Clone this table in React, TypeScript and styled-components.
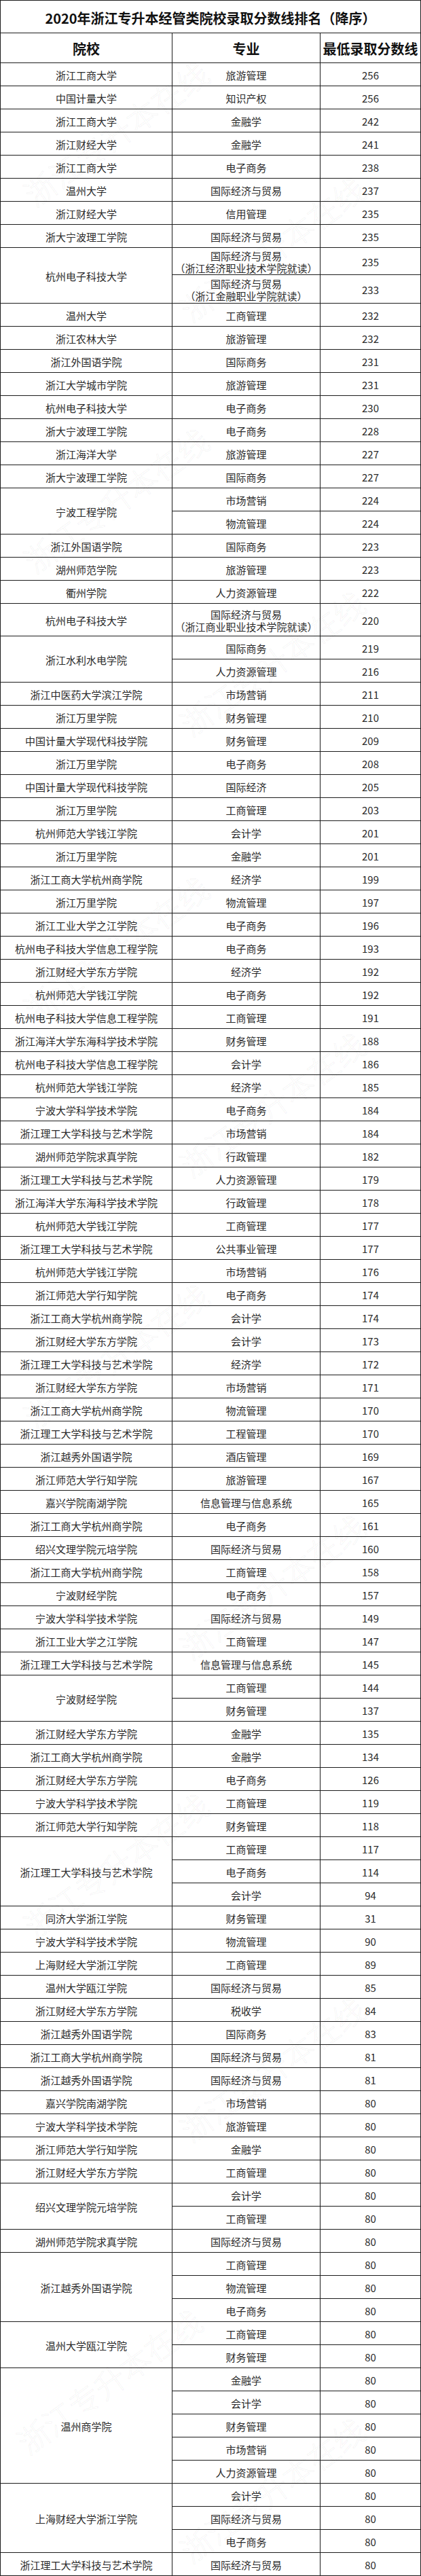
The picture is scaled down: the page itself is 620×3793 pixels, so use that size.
import React from 'react';
import styled, { createGlobalStyle, css } from 'styled-components';

const GlobalStyle = createGlobalStyle`
  html, body {
    margin: 0;
    padding: 0;
    background: #ffffff;
  }
  body {
    font-family: "Noto Sans CJK SC", "Noto Sans", "Liberation Sans", sans-serif;
    color: #222;
  }
`;

type Item = { major: string; score: string; sub?: string; h?: number };
type Group = { school: string; items: Item[] };

const raw: [string, [string, string, string?, number?][]][] = [
  ['浙江工商大学', [['旅游管理', '256']]],
  ['中国计量大学', [['知识产权', '256']]],
  ['浙江工商大学', [['金融学', '242']]],
  ['浙江财经大学', [['金融学', '241']]],
  ['浙江工商大学', [['电子商务', '238']]],
  ['温州大学', [['国际经济与贸易', '237']]],
  ['浙江财经大学', [['信用管理', '235']]],
  ['浙大宁波理工学院', [['国际经济与贸易', '235']]],
  ['杭州电子科技大学', [
    ['国际经济与贸易', '235', '（浙江经济职业技术学院就读）', 40],
    ['国际经济与贸易', '233', '（浙江金融职业学院就读）', 42],
  ]],
  ['温州大学', [['工商管理', '232']]],
  ['浙江农林大学', [['旅游管理', '232']]],
  ['浙江外国语学院', [['国际商务', '231']]],
  ['浙江大学城市学院', [['旅游管理', '231']]],
  ['杭州电子科技大学', [['电子商务', '230']]],
  ['浙大宁波理工学院', [['电子商务', '228']]],
  ['浙江海洋大学', [['旅游管理', '227']]],
  ['浙大宁波理工学院', [['国际商务', '227']]],
  ['宁波工程学院', [['市场营销', '224'], ['物流管理', '224']]],
  ['浙江外国语学院', [['国际商务', '223']]],
  ['湖州师范学院', [['旅游管理', '223']]],
  ['衢州学院', [['人力资源管理', '222']]],
  ['杭州电子科技大学', [['国际经济与贸易', '220', '（浙江商业职业技术学院就读）', 48]]],
  ['浙江水利水电学院', [['国际商务', '219'], ['人力资源管理', '216']]],
  ['浙江中医药大学滨江学院', [['市场营销', '211']]],
  ['浙江万里学院', [['财务管理', '210']]],
  ['中国计量大学现代科技学院', [['财务管理', '209']]],
  ['浙江万里学院', [['电子商务', '208']]],
  ['中国计量大学现代科技学院', [['国际经济', '205']]],
  ['浙江万里学院', [['工商管理', '203']]],
  ['杭州师范大学钱江学院', [['会计学', '201']]],
  ['浙江万里学院', [['金融学', '201']]],
  ['浙江工商大学杭州商学院', [['经济学', '199']]],
  ['浙江万里学院', [['物流管理', '197']]],
  ['浙江工业大学之江学院', [['电子商务', '196']]],
  ['杭州电子科技大学信息工程学院', [['电子商务', '193']]],
  ['浙江财经大学东方学院', [['经济学', '192']]],
  ['杭州师范大学钱江学院', [['电子商务', '192']]],
  ['杭州电子科技大学信息工程学院', [['工商管理', '191']]],
  ['浙江海洋大学东海科学技术学院', [['财务管理', '188']]],
  ['杭州电子科技大学信息工程学院', [['会计学', '186']]],
  ['杭州师范大学钱江学院', [['经济学', '185']]],
  ['宁波大学科学技术学院', [['电子商务', '184']]],
  ['浙江理工大学科技与艺术学院', [['市场营销', '184']]],
  ['湖州师范学院求真学院', [['行政管理', '182']]],
  ['浙江理工大学科技与艺术学院', [['人力资源管理', '179']]],
  ['浙江海洋大学东海科学技术学院', [['行政管理', '178']]],
  ['杭州师范大学钱江学院', [['工商管理', '177']]],
  ['浙江理工大学科技与艺术学院', [['公共事业管理', '177']]],
  ['杭州师范大学钱江学院', [['市场营销', '176']]],
  ['浙江师范大学行知学院', [['电子商务', '174']]],
  ['浙江工商大学杭州商学院', [['会计学', '174']]],
  ['浙江财经大学东方学院', [['会计学', '173']]],
  ['浙江理工大学科技与艺术学院', [['经济学', '172']]],
  ['浙江财经大学东方学院', [['市场营销', '171']]],
  ['浙江工商大学杭州商学院', [['物流管理', '170']]],
  ['浙江理工大学科技与艺术学院', [['工程管理', '170']]],
  ['浙江越秀外国语学院', [['酒店管理', '169']]],
  ['浙江师范大学行知学院', [['旅游管理', '167']]],
  ['嘉兴学院南湖学院', [['信息管理与信息系统', '165']]],
  ['浙江工商大学杭州商学院', [['电子商务', '161']]],
  ['绍兴文理学院元培学院', [['国际经济与贸易', '160']]],
  ['浙江工商大学杭州商学院', [['工商管理', '158']]],
  ['宁波财经学院', [['电子商务', '157']]],
  ['宁波大学科学技术学院', [['国际经济与贸易', '149']]],
  ['浙江工业大学之江学院', [['工商管理', '147']]],
  ['浙江理工大学科技与艺术学院', [['信息管理与信息系统', '145']]],
  ['宁波财经学院', [['工商管理', '144'], ['财务管理', '137']]],
  ['浙江财经大学东方学院', [['金融学', '135']]],
  ['浙江工商大学杭州商学院', [['金融学', '134']]],
  ['浙江财经大学东方学院', [['电子商务', '126']]],
  ['宁波大学科学技术学院', [['工商管理', '119']]],
  ['浙江师范大学行知学院', [['财务管理', '118']]],
  ['浙江理工大学科技与艺术学院', [['工商管理', '117'], ['电子商务', '114'], ['会计学', '94']]],
  ['同济大学浙江学院', [['财务管理', '31']]],
  ['宁波大学科学技术学院', [['物流管理', '90']]],
  ['上海财经大学浙江学院', [['工商管理', '89']]],
  ['温州大学瓯江学院', [['国际经济与贸易', '85']]],
  ['浙江财经大学东方学院', [['税收学', '84']]],
  ['浙江越秀外国语学院', [['国际商务', '83']]],
  ['浙江工商大学杭州商学院', [['国际经济与贸易', '81']]],
  ['浙江越秀外国语学院', [['国际经济与贸易', '81']]],
  ['嘉兴学院南湖学院', [['市场营销', '80']]],
  ['宁波大学科学技术学院', [['旅游管理', '80']]],
  ['浙江师范大学行知学院', [['金融学', '80']]],
  ['浙江财经大学东方学院', [['工商管理', '80']]],
  ['绍兴文理学院元培学院', [['会计学', '80'], ['工商管理', '80']]],
  ['湖州师范学院求真学院', [['国际经济与贸易', '80']]],
  ['浙江越秀外国语学院', [['工商管理', '80'], ['物流管理', '80'], ['电子商务', '80']]],
  ['温州大学瓯江学院', [['工商管理', '80'], ['财务管理', '80']]],
  ['温州商学院', [
    ['金融学', '80'], ['会计学', '80'], ['财务管理', '80'], ['市场营销', '80'], ['人力资源管理', '80'],
  ]],
  ['上海财经大学浙江学院', [['会计学', '80'], ['国际经济与贸易', '80'], ['电子商务', '80']]],
  ['浙江理工大学科技与艺术学院', [['国际经济与贸易', '80']]],
];

const groups: Group[] = raw.map(([school, items]) => ({
  school,
  items: items.map(([major, score, sub, h]) => ({ major, score, sub, h })),
}));

// faint watermark: start point (lower-left end of the text) and angle
const marks: [number, number][] = [
  [40, 290],
  [270, 460],
  [40, 830],
  [270, 1070],
  [40, 1490],
  [270, 1720],
  [40, 2090],
  [270, 2430],
  [40, 2840],
  [270, 3140],
  [30, 3600],
  [270, 3760],
];

const Page = styled.div`
  position: relative;
  width: 620px;
  overflow: hidden;
`;

const Table = styled.div`
  display: grid;
  grid-template-columns: 253px 218px 148px;
  grid-auto-rows: auto;
  border-top: 1px solid #1c1c1c;
  border-left: 1px solid #1c1c1c;
  background: #ffffff;
`;

const cellBase = css`
  box-sizing: border-box;
  border-right: 1px solid #1c1c1c;
  border-bottom: 1px solid #1c1c1c;
  display: flex;
  flex-direction: column;
  align-items: center;
  justify-content: center;
  text-align: center;
  white-space: nowrap;
`;

const TitleCell = styled.div`
  ${cellBase};
  grid-column: 1 / -1;
  height: 48px;
  padding-top: 3px;
  font-size: 20px;
  font-weight: 700;
  color: #111;
`;

const HeadCell = styled.div`
  ${cellBase};
  height: 44px;
  padding-top: 2px;
  font-size: 20px;
  font-weight: 700;
  color: #111;
`;

const SchoolCell = styled.div<{ $span: number }>`
  ${cellBase};
  grid-column: 1;
  grid-row: span ${(p) => p.$span};
  padding-top: 2px;
  font-size: 15px;
  color: #2a2a2a;
`;

const MajorCell = styled.div<{ $h: number }>`
  ${cellBase};
  grid-column: 2;
  height: ${(p) => p.$h}px;
  padding-top: 2px;
  font-size: 15px;
  line-height: 18px;
  color: #2a2a2a;
`;

const ScoreCell = styled.div<{ $h: number }>`
  ${cellBase};
  grid-column: 3;
  height: ${(p) => p.$h}px;
  padding-top: 2px;
  font-size: 15px;
  color: #2a2a2a;
`;

const Line = styled.span`
  display: block;
`;

const WatermarkLayer = styled.div`
  position: absolute;
  inset: 0;
  pointer-events: none;
`;

const Mark = styled.span`
  position: absolute;
  display: block;
  transform-origin: 0 50%;
  transform: rotate(-36deg);
  font-size: 46px;
  line-height: 46px;
  font-weight: 300;
  white-space: nowrap;
  color: transparent;
  -webkit-text-stroke: 1px rgba(0, 0, 0, 0.055);
`;

export default function App() {
  return (
    <>
      <GlobalStyle />
      <Page>
        <Table>
          <TitleCell>2020年浙江专升本经管类院校录取分数线排名（降序）</TitleCell>
          <HeadCell>院校</HeadCell>
          <HeadCell>专业</HeadCell>
          <HeadCell>最低录取分数线</HeadCell>
          {groups.map((g, gi) => (
            <React.Fragment key={gi}>
              <SchoolCell $span={g.items.length}>{g.school}</SchoolCell>
              {g.items.map((it, ii) => {
                const h = it.h ?? 34;
                return (
                  <React.Fragment key={ii}>
                    <MajorCell $h={h}>
                      <Line>{it.major}</Line>
                      {it.sub && <Line>{it.sub}</Line>}
                    </MajorCell>
                    <ScoreCell $h={h}>{it.score}</ScoreCell>
                  </React.Fragment>
                );
              })}
            </React.Fragment>
          ))}
        </Table>
        <WatermarkLayer aria-hidden="true">
          {marks.map(([x, y], i) => (
            <Mark key={i} style={{ left: x, top: y - 23 }}>
              浙江专升本在线
            </Mark>
          ))}
        </WatermarkLayer>
      </Page>
    </>
  );
}
